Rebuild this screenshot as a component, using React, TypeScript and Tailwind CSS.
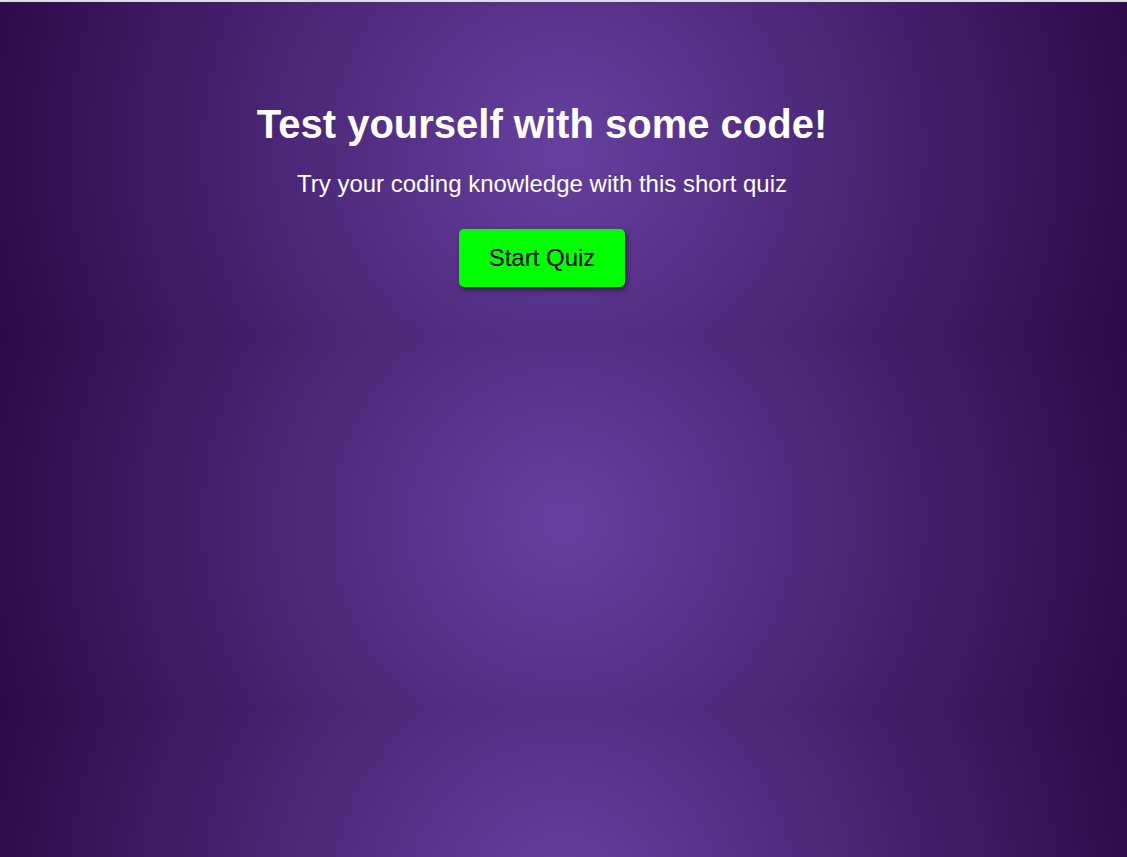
export default function App() {
  return (
    <div className="flex min-h-screen flex-col font-['Liberation_Sans',Arial,sans-serif]">
      <div className="h-[2px] bg-[#dedede]" />
      <main className="flex flex-1 flex-col items-center bg-[radial-gradient(circle,#6640a0,#2c0a47)] bg-size-[100%_374px] bg-position-[0_-40px] bg-repeat pt-[99px] pr-[43px] text-white">
        <h1 className="text-[40px] leading-[46px] font-bold">Test yourself with some code!</h1>
        <p className="mt-[23px] text-[24px] leading-[27.6px]">Try your coding knowledge with this short quiz</p>
        <button
          type="button"
          className="mt-[31px] rounded-[5px] bg-[#00ff00] px-[30px] py-[15.5px] text-[24px] leading-[27.6px] text-black shadow-[2px_3px_5px_rgba(0,0,0,0.45)]"
        >
          Start Quiz
        </button>
      </main>
    </div>
  );
}
